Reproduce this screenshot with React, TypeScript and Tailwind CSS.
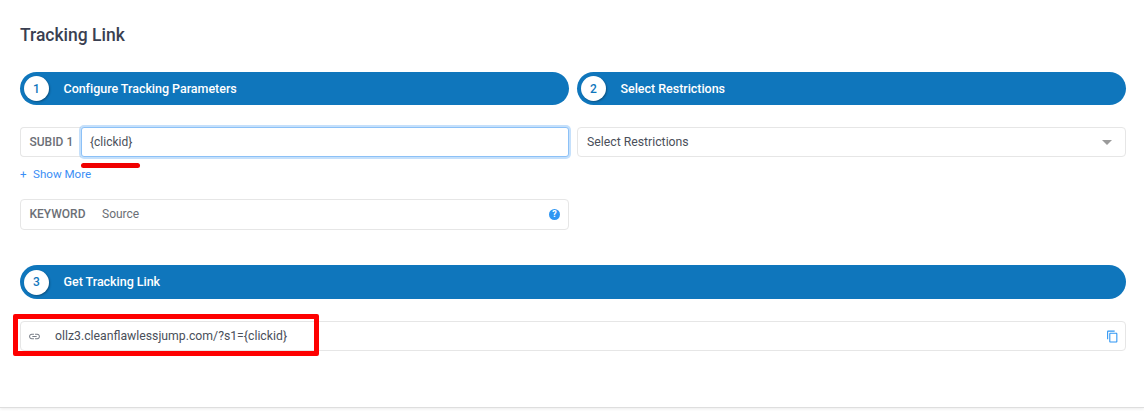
const font = { fontFamily: 'Roboto, sans-serif' }

function StepBar({ n, title, h = 'h-[33px]' }: { n: number; title: string; h?: string }) {
  return (
    <div className={`flex items-center rounded-full bg-[#0f76bc] pl-[4px] ${h}`}>
      <div className="flex h-[25px] w-[25px] shrink-0 items-center justify-center rounded-full bg-white text-[12px] font-medium text-[#0f76bc] shadow-[1px_1px_2px_rgba(0,0,0,0.3)]">
        {n}
      </div>
      <span className="ml-[14.5px] pt-[1px] text-[12.5px] font-medium tracking-[-0.03px] text-white">{title}</span>
    </div>
  )
}

function LinkIcon() {
  return (
    <svg width="13" height="13" viewBox="0 0 24 24" fill="#7a7f88">
      <path d="M3.9 12c0-1.71 1.39-3.1 3.1-3.1h4V7H7c-2.76 0-5 2.24-5 5s2.24 5 5 5h4v-1.9H7c-1.71 0-3.1-1.39-3.1-3.1zM8 13h8v-2H8v2zm9-6h-4v1.9h4c1.71 0 3.1 1.39 3.1 3.1s-1.39 3.1-3.1 3.1h-4V17h4c2.76 0 5-2.24 5-5s-2.24-5-5-5z" />
    </svg>
  )
}

function CopyIcon() {
  return (
    <svg width="13" height="13" viewBox="0 0 24 24" fill="#2f96f3">
      <path d="M16 1H4c-1.1 0-2 .9-2 2v14h2V3h12V1zm3 4H8c-1.1 0-2 .9-2 2v14c0 1.1.9 2 2 2h11c1.1 0 2-.9 2-2V7c0-1.1-.9-2-2-2zm0 16H8V7h11v14z" />
    </svg>
  )
}

export default function App() {
  return (
    <div className="relative h-[411px] w-[1144px] overflow-hidden bg-white" style={font}>
      <div className="h-[408px] border-b border-[#dedede] pl-[20px] pr-[18px] pt-[25px] shadow-[0_1px_3px_rgba(0,0,0,0.08)]">
        <h1 className="text-[17.5px] font-medium leading-[21px] text-[#3a3f51]">Tracking Link</h1>

        <div className="mt-[26px] grid grid-cols-2 gap-x-[8px]">
          <div>
            <StepBar n={1} title="Configure Tracking Parameters" />
            <div className="mt-[22px] flex h-[30px] items-stretch">
              <div className="flex w-[61px] shrink-0 items-center rounded-l border border-r-0 border-[#e6e6e6] pl-[8.5px] text-[12px] font-medium text-[#6b6f76]">
                SUBID 1
              </div>
              <div className="flex flex-1 items-center rounded-[3px] border border-[#8cc1f7] bg-white pl-[8px] text-[12px] text-[#4a4f5a] shadow-[0_0_0_2px_rgba(140,193,247,0.5)]">
                {'{clickid}'}
              </div>
            </div>
            <div className="mt-[11px] flex h-[14px] items-center text-[11.6px] text-[#3b8ef5]">
              <span className="w-[13px]">+</span>
              <span>Show More</span>
            </div>
            <div className="mt-[17px] flex h-[31px] items-center rounded border border-[#e6e6e6] pb-[2px] pl-[8.5px] pr-[8px]">
              <span className="w-[72.5px] text-[12px] font-medium text-[#6b6f76]">KEYWORD</span>
              <span className="flex-1 text-[12px] text-[#6b6f76]">Source</span>
              <span className="mt-[2px] flex h-[11px] w-[11px] items-center justify-center rounded-full bg-[#2f96f3] text-[9px] font-bold leading-none text-white">?</span>
            </div>
          </div>
          <div>
            <StepBar n={2} title="Select Restrictions" />
            <div className="mt-[22px] flex h-[30px] items-center justify-between rounded border border-[#e6e6e6] pl-[9px] pr-[13px] text-[12.25px] text-[#4a4f5a]">
              <span>Select Restrictions</span>
              <span className="h-0 w-0 border-x-[5px] border-t-[5px] border-x-transparent border-t-[#9a9a9a]" />
            </div>
          </div>
        </div>

        <div className="mt-[35px]">
          <StepBar n={3} title="Get Tracking Link" h="h-[34px]" />
        </div>

        <div className="mt-[22px] flex h-[30px] items-center rounded border border-[#e6e6e6] pl-[7px] pr-[6px]">
          <LinkIcon />
          <span className="ml-[14px] flex-1 text-[12.25px] text-[#4a4f5a]">ollz3.cleanflawlessjump.com/?s1={'{clickid}'}</span>
          <CopyIcon />
        </div>
      </div>

      {/* red annotations on top of the screenshot */}
      <div className="absolute left-[81px] top-[163px] h-[5px] w-[59px] rounded-full bg-[#f00000]" />
      <div className="absolute left-[13px] top-[314px] h-[42px] w-[306px] rounded-[2px] border-[5px] border-[#fe0000]" />
    </div>
  )
}
